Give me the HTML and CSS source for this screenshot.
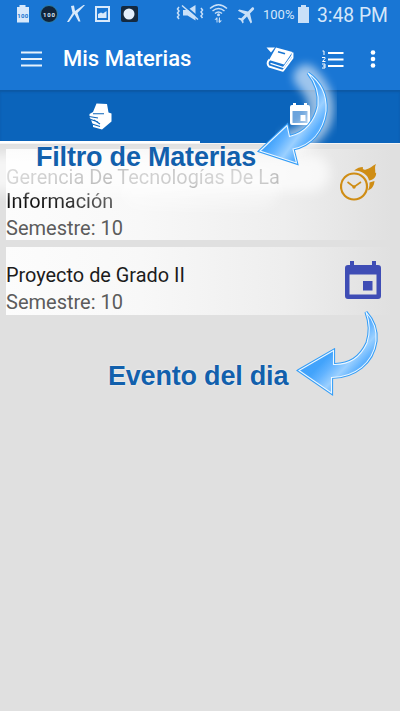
FILE: index.html
```html
<!DOCTYPE html>
<html lang="es">
<head>
<meta charset="utf-8">
<title>Mis Materias</title>
<link rel="stylesheet" href="styles.css">
</head>
<body>
<div class="screen">
  <header class="top">
    <div class="status">
      <svg class="status-left" viewBox="0 0 200 30" width="200" height="30">
        <g fill="#d8e9fb">
          <path d="M19.500 5h6v2h3.500v15.500h-12V7h2.500z"/>
          <path d="M71 6l3-.5 1 5.500L83.500 5h1.500l-7.500 8 3 8.500h-2l-4-7.500-5.500 8h-2l5.500-9z"/>
          <path fill-rule="evenodd" d="M95 6h15v16H95zM97 8v12h11V8z"/>
          <path d="M98 18v-4l3-1.500 2 1 3.500-2.500v7z"/>
        </g>
        <circle cx="49" cy="14" r="8.500" fill="#10243b" stroke="#2e80a8"/>
        <rect x="121" y="6" width="17" height="16" rx="2" fill="#14293f"/>
        <circle cx="129" cy="14" r="5.500" fill="#e3effc"/>
        <text x="17.200" y="17.500" class="tiny" fill="#1976d2" textLength="11">100</text>
        <text x="43" y="16.500" class="tiny" fill="#d8e9fb" textLength="12">100</text>
      </svg>
      <svg class="status-mid" viewBox="175 0 85 30" width="85" height="30">
        <g fill="#c9e0f8">
          <path d="M183 10h4.500l8-5v15.500l-8-5H183z"/>
          <path transform="translate(247 14.500) rotate(45) scale(.95) translate(-11.500 -12)" d="M21 16v-2l-8-5V3.500C13 2.670 12.330 2 11.500 2S10 2.670 10 3.500V9l-8 5v2l8-2.500V19l-2 1.500V22l3.500-1 3.500 1v-1.500L13 19v-5.500z"/>
          <path d="M214.500 20l2-2.500 1 0v5h-1v-3zM219 17.500h1v3h2l-2.500 2.500-1-1z"/>
          <circle cx="218.500" cy="14.800" r="1.500"/>
        </g>
        <path d="M183 4.500l16 13.500" stroke="#1976d2" stroke-width="2"/>
        <path d="M182 5.500l16 14M179 7l-1.500 2 1.500 2-1.500 2 1.500 2-1.500 2 1.500 2M201 8l1.500 2-1.500 2 1.500 2-1.500 2 1.500 2M210 8.500q8.500-7.500 17 0M212.500 11q6-5 12 0M215 13.500q3.500-3 7 0" fill="none" stroke="#c9e0f8" stroke-width="1.500"/>
      </svg>
      <span class="percent">100%</span>
      <svg class="battery" viewBox="0 0 11 18" width="11" height="18"><path d="M3 0h5v2h3v16H0V2h3z" fill="#c9e0f8"/></svg>
      <span class="clock">3:48 PM</span>
    </div>
    <div class="bar">
      <svg class="menu" viewBox="0 0 22 16" width="22" height="16"><path d="M0 1.500h21M0 8h21M0 14.500h21" stroke="#e6f1fc" stroke-width="2"/></svg>
      <h1>Mis Materias</h1>
      <svg class="book" viewBox="0 0 28 27" width="28" height="27">
        <path d="M.5 1.500h8.500L5 6.500zM10 1.500L26.500 6 18 18.500 3 14z" fill="#fff"/>
        <path d="M3.500 13.500Q0 17 3 20.500L17 24.800 26.500 12V6.500" fill="none" stroke="#fff" stroke-width="1.900" stroke-linejoin="round"/>
        <path d="M4.500 17.300L17.500 21.500 26.500 9" fill="none" stroke="#fff" stroke-width="1.300"/>
        <path d="M12 5.800l7 2" stroke="#1976d2" stroke-width="1.600"/>
      </svg>
      <svg class="list" viewBox="0 0 22 19" width="22" height="19">
        <path d="M6 3h15.500M6 9.500h15.500M6 16h15.500" stroke="#fff" stroke-width="2"/>
        <path d="M.500 1H2v4M0 7.500h3v1L.500 11.500H3.500M0 14h3v4H0M1 16h2" fill="none" stroke="#fff"/>
      </svg>
      <svg class="more" viewBox="0 0 6 18" width="6" height="18"><g fill="#fff"><circle cx="3" cy="2.500" r="2.300"/><circle cx="3" cy="9" r="2.300"/><circle cx="3" cy="15.500" r="2.300"/></g></svg>
    </div>
  </header>
  <nav class="tabs">
    <div class="tab active">
      <svg viewBox="0 0 23 28" width="23" height="28">
        <path d="M7.500.500L18 1l1.500 8.500 3 1v8L13 26.500l-9-2.500V22l-1-2.500-1-3-1.500-2.500V11L4 9z" fill="#fff"/>
        <path d="M4 10.800h11M0 13.500l9 1.500M2 16.500l7 2.500M3 21l8 2.500M5 17l6 4" stroke="#0b64bb" stroke-width="1.100"/>
      </svg>
    </div>
    <div class="tab">
      <svg viewBox="0 0 20 23" width="20" height="23"><path fill="#6ba3dc" d="M2 7h16v14H2z"/><path fill="#fff" fill-rule="evenodd" d="M3 0h3v2h8V0h3v2h1q2 0 2 2v16q0 2-2 2H2q-2 0-2-2V4q0-2 2-2h1zM2.500 8v12h15V8z"/><path fill="#fff" d="M10.500 12h5v6h-5z"/></svg>
    </div>
  </nav>
  <main>
    <article class="card first">
      <div class="info"><h2><span class="l1">Gerencia De Tecnologías De La</span><br><span class="l2">Información</span></h2><p>Semestre: 10</p></div>
      <svg class="fire" viewBox="0 0 38 38" width="38" height="38">
        <path d="M14 6.500C17 4 20 3 23 3C22 5 24 6.500 26 5.500C30 4.500 32 2 36 0C34 4 36 6 35 9C36 9 36 8 36 8C37 13 33 16 29 16.500C28 11 22 6.500 14 6.500ZM29.500 18.500L34.500 17C34 22 32 25 28 26.500Q30 22 29.500 18.500Z" fill="#cf8d15"/>
        <circle cx="14" cy="22.500" r="13" fill="none" stroke="#cf8d15" stroke-width="2.200"/>
        <path d="M7.500 18l6.500 5 7-5" fill="none" stroke="#cf8d15" stroke-width="1.600"/>
        <circle cx="14" cy="23" r="1.700" fill="#cf8d15"/>
      </svg>
    </article>
    <article class="card second">
      <div class="info"><h2><span class="l3">Proyecto de Grado II</span></h2><p>Semestre: 10</p></div>
      <svg class="event" viewBox="0 0 36 38" width="36" height="38"><path fill="#3f4db5" fill-rule="evenodd" d="M5 0h4v4h18V0h4v4h2q3 0 3 3v28q0 3-3 3H3q-3 0-3-3V7q0-3 3-3h2zM4.500 13.500v20h27v-20z"/><path fill="#3f4db5" d="M18 20h9.500v9.500H18z"/></svg>
    </article>
    <div class="haze"></div>
    <div class="haze wide"></div>
  </main>
  <svg class="arrows" viewBox="0 0 400 711" width="400" height="711">
    <defs>
      <linearGradient id="blue" x1="0" y1="0" x2="1" y2="1"><stop offset="0" stop-color="#3b9ffb"/><stop offset=".46" stop-color="#42a3fb"/><stop offset=".54" stop-color="#62b3ff"/><stop offset=".64" stop-color="#9bd0ff"/><stop offset=".74" stop-color="#58aefe"/></linearGradient>
      <filter id="soft" x="-50%" y="-50%" width="200%" height="200%"><feGaussianBlur stdDeviation="4"/></filter>
      <path id="arrow" d="M299 370.500L333.500 350.500v14C350 365 361 356 367 343Q372 328 366 312C375 322 377 331 376 341C373 363 355 377 331.500 377.500V393Z"/>
      <path id="curve" d="M260 151L287 125.500L289.500 136.500C306 133 315 120 318 106Q320 88 308 73C322 83 327 97 326 111C323 132 311 145 293 149L296.500 163Z"/>
    </defs>
    <path d="M306 77Q327 98 319 121Q310 137 291 143" fill="none" stroke="#fff" stroke-width="25" stroke-linecap="round" opacity=".58" filter="url(#soft)"/>
    <g stroke="#349df7" stroke-width="3.200"><use href="#curve" fill="none"/><use href="#arrow" fill="none"/></g>
    <g fill="url(#blue)" stroke="#ecf7ff" stroke-width="1.100"><use href="#curve"/><use href="#arrow"/></g>
  </svg>
  <div class="label filter">Filtro de Materias</div>
  <div class="label today">Evento del dia</div>
</div>
</body>
</html>
```
FILE: styles.css
```css
* { box-sizing: border-box; }
body { margin: 0; font-family: Roboto, sans-serif; }
svg { display: block; flex: none; }
h1, h2, p { margin: 0; font-weight: 400; }
.screen { position: relative; width: 400px; height: 711px; overflow: hidden; background: #e0e0e0; }
.top { height: 90px; background: #1976d4; }
.status { display: flex; height: 30px; color: #d5e7fa; white-space: nowrap; }
.status-left { margin-right: -25px; }
.tiny { font: bold 6px Roboto, sans-serif; }
.percent { width: 35px; margin-left: 3px; font-size: 13px; line-height: 30px; }
.battery { margin: 5px 8px 0 0; }
.clock { font-size: 19.3px; line-height: 31px; }
.bar { display: flex; align-items: center; height: 58px; padding-left: 21px; }
h1 { width: 182px; margin-left: 20px; font-size: 22px; font-weight: 500; line-height: 58px; color: #fff; }
.book { margin-left: 21px; }
.list { margin-left: 28px; }
.more { margin-left: 26px; }
.tabs { display: flex; height: 53px; background: #0b64bb; box-shadow: inset 0 2px 2px #0d58a3; }
.tab { display: flex; flex: 1; justify-content: center; padding-top: 13px; }
.active { border-bottom: 2px solid #fff; }
main { position: relative; height: 568px; padding: 5px 8px 0 6px; overflow: hidden; border-top: 1px solid #f5f5f5; }
.card { display: flex; background: linear-gradient(90deg, #fcfcfc 0%, #f8f8f8 35%, #eee 72%, #e0e0e0 100%); }
.first { height: 91px; margin-bottom: 7px; padding-top: 17px; }
.second { height: 68px; padding-top: 17px; }
.info { width: 334px; white-space: nowrap; }
h2 { font-size: 19.9px; line-height: 24px; color: #1c1c1c; }
.l1, .l2 { background-clip: text; color: transparent; }
.l1 { background-image: linear-gradient(90deg, #888 0%, #555 30%, #111 65%, #444 80%, #111 100%); }
.l2 { background-image: linear-gradient(90deg, #111 35%, #555 90%); }
p { font-size: 20px; line-height: 28px; color: #5c5c5c; }
.fire { margin-top: -2px; }
.event { margin: -3px 0 0 5px; }
.haze { position: absolute; left: -20px; top: 10px; width: 350px; height: 38px; border-radius: 20px; background: rgba(255,255,255,.68); filter: blur(6px); }
.wide { left: 120px; top: 22px; width: 160px; height: 42px; background: rgba(255,255,255,.35); }
.arrows { position: absolute; left: 0; top: 0; }
.label { position: absolute; font: bold 27px/22px "Liberation Sans", Arial, sans-serif; letter-spacing: -.2px; color: #1260ac; white-space: nowrap; text-shadow: 0 0 2px #fff; }
.filter { left: 36px; top: 146px; }
.today { left: 108px; top: 365px; }
```
